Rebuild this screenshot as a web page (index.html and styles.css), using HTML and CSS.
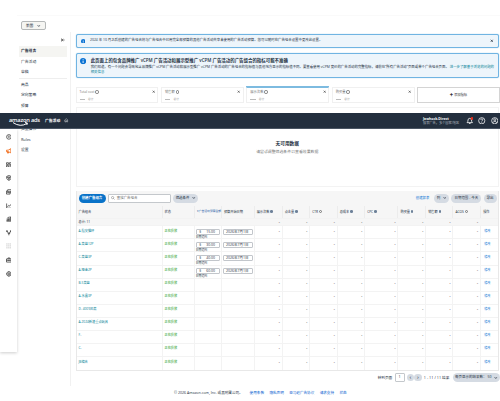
FILE: index.html
```html
<!DOCTYPE html>
<html lang="zh-CN">
<head>
    <meta charset="UTF-8">
    <meta name="viewport" content="width=device-width, initial-scale=1.0">
    <title>广告组合</title>
    <link rel="stylesheet" href="styles.css">
</head>
<body>

    <!-- Shared symbols -->
    <svg class="symbols" width="0" height="0">
        <symbol id="i-info" viewBox="0 0 10 10"><circle cx="5" cy="5" r="5"/><path d="M5 2v1.4M5 4.3v3.8" stroke="#fff" stroke-width="1.4"/></symbol>
        <symbol id="i-close" viewBox="0 0 10 10"><path d="M2 2l6 6M8 2l-6 6" stroke="currentColor" stroke-width="2"/></symbol>
        <symbol id="i-down" viewBox="0 0 10 10"><path d="M1.5 3l3.5 4 3.5-4" fill="none" stroke="currentColor" stroke-width="1.8"/></symbol>
    </svg>

    <header class="topbar">
        <div class="logo">amazon ads
            <svg viewBox="0 0 30 5"><path d="M4 0.6q7.500 5 14 0.800M16 0.500l2.400 0.500-0.600 2" fill="none" stroke="#fff" stroke-width="1"/></svg>
        </div>
        <span class="topbar-title">广告活动</span>
        <svg class="home" viewBox="0 0 10 10"><path d="M1 5l4-3.500 4 3.500M2 4.500v4.300h2.200V6h1.600v2.800H8V4.500" fill="none" stroke="#fff" stroke-width="0.9"/></svg>
        <div class="account">
            <b>Jawhock-Direct</b>
            <span>搜索广告，多个国家/地区</span>
        </div>
        <svg class="top-icon" viewBox="0 0 14 14"><path d="M2 10.500q1.800-1.500 1.800-5Q4 2.500 7 2.500t3.200 3q0 3.500 1.800 5zM5.500 12.200h3" fill="none" stroke="#fff" stroke-width="1.500"/><circle cx="11.300" cy="2.700" r="2.700" fill="#e0301e"/></svg>
        <svg class="top-icon" viewBox="0 0 14 14"><circle cx="7" cy="7" r="5.800" fill="none" stroke="#fff" stroke-width="1.400"/><path d="M5 5.500q0-1.800 2-1.800t2 1.700q0 1-2 1.900v1M7 9.500v1.300" fill="none" stroke="#fff" stroke-width="1.300"/></svg>
        <svg class="top-icon" viewBox="0 0 14 14"><circle cx="7" cy="7" r="5.800" fill="none" stroke="#fff" stroke-width="1.400"/><circle cx="7" cy="5.300" r="1.900" fill="none" stroke="#fff" stroke-width="1.300"/><path d="M3.300 10.800q0.700-2.500 3.700-2.500t3.700 2.500" fill="none" stroke="#fff" stroke-width="1.300"/></svg>
    </header>

    <nav class="rail">
        <svg viewBox="0 0 12 12"><circle cx="6" cy="6" r="4.800"/><path d="M6 3v4M4.500 5.500L6 7.200l1.500-1.700"/></svg>
        <svg class="on" viewBox="0 0 12 12"><path d="M1 4.500h3.500L10 1.500v8.500L4.500 7.500H1zM3 7.500v3h2.200V8"/></svg>
        <svg viewBox="0 0 12 12"><path d="M1 1.500h4v3.500H1zM7 1.500h4v3.500H7zM1 7h4v3.500H1zM7 7.500h4M7 10h4"/></svg>
        <svg viewBox="0 0 12 12"><path d="M6 1l4.700 2v3.500Q10 9.700 6 11.200 2 9.700 1.300 6.500V3z"/><circle cx="6" cy="5.500" r="1.800"/><path d="M2 4l3 1.500M10 4L7 5.500M6 7.500v3"/></svg>
        <svg viewBox="0 0 12 12"><path d="M3.500 1.500h7.500v6H3.500zM3.500 4H1v6.500h7.500v-3"/><path d="M4 7l2.500-3 2 2L10.500 4"/></svg>
        <svg viewBox="0 0 12 12"><path d="M1.300 1v9.800H11M3 8l2.500-3 2 1.500L10.500 2.500"/></svg>
        <svg viewBox="0 0 12 12"><path d="M1 10.800h10M2 10V7.500h1.500V10M5 10V5.500h1.500V10M8.300 10V2h1.500v8M1.500 5.500L7 1.500"/></svg>
        <svg viewBox="0 0 12 12"><path d="M6 11V7L2 2.500M6 7l4-4.500M3 6l3 2 3-2"/><circle cx="2" cy="2.300" r="1.200"/><circle cx="10" cy="2.300" r="1.200"/></svg>
        <svg class="dim" viewBox="0 0 12 12"><path d="M1 2h2M5 2h2M9 2h2M1 6h2M5 6h2M9 6h2M1 10h2M5 10h2M9 10h2"/></svg>
        <svg viewBox="0 0 12 12"><path d="M1 4h10v6.500H1zM4 4V2h4v2M1 7h10M6 6v2"/></svg>
        <svg viewBox="0 0 12 12"><circle cx="6" cy="6" r="4.500"/><circle cx="6" cy="6" r="1.800"/><path d="M6 0.500v2M6 9.500v2M0.500 6h2M9.500 6h2"/></svg>
    </nav>

    <div class="page">
        <div class="country-bar"><button class="country">美国 <svg><use href="#i-down"/></svg></button></div>

        <div class="columns">
            <aside class="sidebar">
                <div class="collapse"><svg viewBox="0 0 10 10"><path d="M1 1v8M9 5H3M5.500 2L2.500 5l3 3" fill="none" stroke="#333" stroke-width="1.500"/></svg></div>
                <a class="side-item selected">广告组合</a>
                <a class="side-item">广告活动</a>
                <a class="side-item">草稿</a>
                <hr>
                <a class="side-item">商品</a>
                <a class="side-item">定向策略</a>
                <a class="side-item">预算</a>
                <a class="side-item bulk">批量操作</a>
                <a class="side-item">Rules</a>
                <a class="side-item">设置</a>
            </aside>

            <main class="content">
                <div class="alert alert-small">
                    <svg class="info"><use href="#i-info"/></svg>
                    <span>2024 年 10 月之后创建的广告组合将与广告组合中已用完全部预算的其他广告活动共享未使用的广告活动预算。您可以随时在广告组合设置中更改此设置。</span>
                    <svg class="close"><use href="#i-close"/></svg>
                </div>

                <div class="alert alert-large">
                    <svg class="info"><use href="#i-info"/></svg>
                    <div>
                        <h4>此页面上的包含品牌推广 vCPM 广告活动和展示型推广 vCPM 广告活动的广告组合的指标可能不准确</h4>
                        <p>我们知道，有一个问题会导致包含品牌推广 vCPM 广告活动和展示型推广 vCPM 广告活动的广告组合的指标值与其他地方显示的指标值不同。要查看使用 vCPM 竞价的广告活动的完整指标，请前往“所有广告活动”页面或单个广告组合页面。 <a>进一步了解基于浏览的问题的<br>相关信息</a></p>
                    </div>
                </div>

                <div class="metrics">
                    <div class="metric"><div>Total cost <i class="tip"></i></div><div class="sum"><b></b>总计</div><svg class="close"><use href="#i-close"/></svg></div>
                    <div class="metric"><div>销售额 <i class="tip"></i></div><div class="sum"><b></b>总计</div><svg class="close"><use href="#i-close"/></svg></div>
                    <div class="metric active"><div>展示次数 <i class="tip"></i></div><div class="sum"><b></b>总计</div><svg class="close"><use href="#i-close"/></svg></div>
                    <div class="metric"><div>购买量 <i class="tip"></i></div><div class="sum"><b></b>总计</div><svg class="close"><use href="#i-close"/></svg></div>
                    <div class="metric add">✚ 添加指标</div>
                </div>

                <section class="chart">
                    <h3>无可用数据</h3>
                    <p>请尝试调整筛选条件以查看效果数据</p>
                </section>

                <section class="panel">
                    <div class="toolbar">
                        <button class="primary">创建广告组合</button>
                        <div class="search"><svg viewBox="0 0 10 10"><circle cx="4" cy="4" r="2.800" fill="none" stroke="#555"/><path d="M6 6l3 3" stroke="#555"/></svg>查找广告组合</div>
                        <button class="pill filter">筛选条件 <svg><use href="#i-down"/></svg></button>
                        <a class="create-report">创建报表</a>
                        <button class="pill cols">列 <svg><use href="#i-down"/></svg></button>
                        <button class="pill range">日期范围 - 今天</button>
                        <button class="pill export">导出</button>
                    </div>
                    <div class="grid" id="grid">
                        <div class="row head">
                            <span>广告组合</span><span>状态</span><span class="sorted">▾广告活动预算金额</span><span>预算开始日期</span>
                            <span>展示次数 <i class="tip blue"></i></span><span>点击量 <i class="tip blue"></i></span><span>CTR <i class="tip"></i></span><span>总成本 <i class="tip blue"></i></span><span>CPC <i class="tip blue"></i></span><span>购买量 <i class="tip blue"></i></span><span>销售额 <i class="tip blue"></i></span><span>ACOS <i class="tip"></i></span><span>操作</span>
                        </div>
                        <div class="row total">
                            <span>总计: 11</span><span></span><span></span><span></span>
                            <span class="num">-</span><span class="num">-</span><span class="num">-</span><span class="num">-</span><span class="num">-</span><span class="num">-</span><span class="num">-</span><span class="num">-</span><span></span>
                        </div>
                    </div>
                </section>

                <div class="pager">
                    <span>转到页面</span>
                    <span class="page-input">1</span>
                    <span class="step">‹</span>
                    <span class="step next">›</span>
                    <span class="count">1 - 11 / 11 结果</span>
                    <button class="pill per-page">每页显示的结果数： 50 <svg><use href="#i-down"/></svg></button>
                </div>
            </main>
        </div>

        <footer class="footer">
            <span>© 2026 Amazon.com, Inc. 或其附属公司。</span>
            <a>使用条款</a><a>隐私声明</a><a>亚马逊广告协议</a><a>请求支持</a><a>状态</a>
        </footer>
    </div>

    <script>
        // name, budget
        const portfolios = [
            ['A-指尖猫环', '15.00'],
            ['A-菜篮12P', '30.00'],
            ['C-菜篮3P', '40.00'],
            ['A-哑金2P', '60.00'],
            ['B-5菜篮'],
            ['A-水晶3P'],
            ['D- 4009风扇'],
            ['A-2024新速重点玩具'],
            ['F-'],
            ['C-'],
            ['JB编合']
        ];

        const grid = document.getElementById('grid');
        portfolios.forEach(function (p) {
            const row = document.createElement('div');
            row.className = 'row';
            let html = '<span class="name">' + p[0] + '</span><span class="status">正在投放</span>';
            if (p[1]) {
                html += '<span class="budget"><u class="field"><em>$</em>' + p[1] + '</u><small>日期范围</small></span>';
                html += '<span class="budget"><u class="field date">2026年7月1日</u></span>';
            } else {
                html += '<span></span><span></span>';
            }
            for (let i = 0; i < 8; i++) {
                html += '<span class="num">-</span>';
            }
            html += '<span class="edit">修改</span>';
            row.innerHTML = html;
            grid.appendChild(row);
        });
    </script>

</body>
</html>
```
FILE: styles.css
```css
* {
    box-sizing: border-box;
}
body {
    margin: 0;
    width: 500px;
    height: 401px;
    overflow: hidden;
    position: relative;
    background: #fff;
    color: #232f3e;
    font-family: "Open Sans", "Noto Sans CJK SC", sans-serif;
    font-size: 3.3px;
    line-height: 1.4;
}
h3, h4, p {
    margin: 0;
}
button {
    font: inherit;
    color: inherit;
    padding: 0;
    border: 0;
    white-space: nowrap;
}
svg {
    display: block;
    flex: none;
}
.symbols {
    position: absolute;
}

/* Fixed header */
.topbar {
    position: absolute;
    top: 113px;
    left: 0;
    width: 500px;
    height: 16px;
    z-index: 3;
    display: flex;
    align-items: center;
    background: #232f3e;
    color: #fff;
    border-bottom: 1px solid #4a5563;
    padding: 0 2px 0 9px;
}
.logo {
    width: 36px;
    height: 10px;
    font-size: 5.7px;
    font-weight: 600;
    line-height: 8px;
    white-space: nowrap;
    letter-spacing: -0.2px;
}
.logo svg {
    width: 30px;
    height: 5px;
    margin-top: -1.5px;
}
.topbar-title {
    width: 19px;
    font-size: 3.8px;
    font-weight: 700;
    white-space: nowrap;
}
.home {
    width: 4.5px;
    height: 4.5px;
}
.account {
    margin-left: auto;
    width: 42.5px;
    font-size: 3.2px;
    line-height: 4px;
    white-space: nowrap;
}
.account b {
    display: block;
    font-size: 3.4px;
    line-height: 4px;
}
.account span {
    color: #aab2bc;
}
.top-icon {
    width: 7.5px;
    height: 7.5px;
    margin-right: 5px;
}
.top-icon:last-child {
    margin-right: 0;
}

/* Icon rail */
.rail {
    position: absolute;
    top: 129px;
    left: 0;
    width: 17px;
    height: 223px;
    z-index: 2;
    padding: 5.3px 0 0 5.5px;
    background: #fff;
    box-shadow: 0 1px 3px rgba(0, 0, 0, 0.2);
}
.rail svg {
    width: 5.8px;
    height: 5.8px;
    margin-bottom: 7.85px;
    fill: none;
    stroke: #333;
    stroke-width: 1.5;
}
.rail .on {
    stroke: #f0640f;
    stroke-width: 1.7;
}
.rail .dim {
    stroke: #999;
}

.page {
    padding: 15px 0 0 17px;
}
.country-bar {
    height: 16.5px;
    padding: 5px 0 0 4px;
    border-top: 1px solid #fafafa;
}
.country {
    display: flex;
    align-items: center;
    justify-content: center;
    gap: 4px;
    width: 24.5px;
    height: 9px;
    border: 1px solid #b5b8b8;
    border-radius: 2px;
    background: #f5f5f2;
    font-size: 3.7px;
}
.country svg, .pill svg {
    width: 3.6px;
    height: 3.6px;
}
.columns {
    display: flex;
    height: 354px;
}

/* Side menu */
.sidebar {
    width: 54px;
    padding: 6px 3px 0 2px;
    border-right: 1px solid #f1f1f1;
}
.collapse {
    display: flex;
    justify-content: flex-end;
    height: 8.8px;
    padding-right: 2.5px;
}
.collapse svg {
    width: 4px;
    height: 4px;
    margin-top: 0.5px;
}
.side-item {
    display: block;
    height: 10.5px;
    padding-left: 2px;
    font-size: 3.8px;
    line-height: 10.8px;
}
.side-item.selected {
    background: #f5f5f2;
    font-weight: 700;
}
.sidebar hr {
    height: 1px;
    margin: 0.6px 0 0.6px;
    border: 0;
    background: #eee;
}
.side-item.bulk {
    margin-top: 12.6px;
}

/* Content */
.content {
    flex: 1;
    padding: 2.5px 1px 0 4.5px;
}
.alert {
    display: flex;
    border: 1px solid #70b4e2;
    border-radius: 2px;
    background: #edf5fb;
    box-shadow: 0 0 1px #70b4e2;
}
.info {
    fill: #0972d3;
}
.alert-small {
    align-items: center;
    height: 13.5px;
    padding: 0 4px;
    font-size: 3.41px;
    white-space: nowrap;
}
.alert-small .info {
    width: 4.5px;
    height: 4.5px;
    margin-right: 5px;
}
.alert-small .close {
    margin-left: auto;
}
.close {
    width: 3.6px;
    height: 3.6px;
}
.alert-large {
    height: 25px;
    margin-top: 5.5px;
    padding: 3.2px 3px 0;
}
.alert-large .info {
    width: 6.2px;
    height: 6.2px;
    margin: 1.2px 4.3px 0 0.7px;
}
.alert h4 {
    font-size: 4.45px;
    line-height: 6.5px;
    font-weight: 600;
    white-space: nowrap;
}
.alert p {
    font-size: 3.42px;
    line-height: 5px;
    margin-top: 0.6px;
    white-space: nowrap;
}
.alert a {
    color: #007e94;
}
.metrics {
    display: grid;
    grid-template-columns: repeat(5, 1fr);
    gap: 2.4px;
    height: 16px;
    margin: 9px -1px 0 0;
}
.metric {
    position: relative;
    padding: 1.8px 3px 0;
    border: 1px solid #f0f0f0;
    color: #777;
    white-space: nowrap;
}
.metric .close {
    position: absolute;
    top: 2px;
    right: 2px;
    width: 3.4px;
    height: 3.4px;
    color: #444;
}
.metric.active {
    border-top-color: #7dbbe0;
    box-shadow: 0 -1px #7dbbe0;
}
.metric .sum {
    display: flex;
    align-items: center;
    gap: 3px;
    margin-top: 3.2px;
    font-size: 2.8px;
    color: #999;
}
.sum b {
    width: 5.5px;
    height: 1px;
    background: #bbb;
}
.metric.add {
    display: flex;
    align-items: center;
    justify-content: center;
    padding: 0;
    border: 1px solid #d4d4d4;
    color: #333;
}
.tip {
    display: inline-block;
    width: 3.4px;
    height: 3.4px;
    border: 1px solid #777;
    border-radius: 50%;
    vertical-align: -0.9px;
}
.tip.blue {
    width: 2.6px;
    height: 2.6px;
    border: 0;
    background: #6d8199;
    vertical-align: -0.3px;
}
.chart {
    height: 79.5px;
    margin-top: 4px;
    padding-top: 31.5px;
    border: 1px solid #f3f3f3;
    text-align: center;
}
.chart h3 {
    font-size: 4.7px;
    line-height: 7px;
}
.chart p {
    margin-top: 1.5px;
    font-size: 3.9px;
    line-height: 7px;
    color: #777;
}

/* Table panel */
.panel {
    margin-top: 4.5px;
    border: solid #e8e8e8;
    border-width: 0 1px 1px;
}
.toolbar {
    display: flex;
    align-items: center;
    height: 14.5px;
    padding: 0 1.5px 0 2px;
    background: #f6f6f6;
}
.primary {
    width: 27px;
    height: 8.5px;
    border-radius: 5px;
    background: #0972c8;
    color: #fff;
    font-weight: 700;
    font-size: 3.45px;
}
.search {
    display: flex;
    align-items: center;
    gap: 2px;
    width: 63px;
    height: 9px;
    margin-left: 2.3px;
    padding-left: 2px;
    border: 1px solid #c4c8cc;
    border-radius: 1px;
    background: #fff;
    font-size: 3.45px;
    color: #666;
}
.search svg {
    width: 4px;
    height: 4px;
}
.pill {
    display: flex;
    align-items: center;
    justify-content: center;
    gap: 2.5px;
    height: 8.5px;
    border-radius: 5px;
    background: #d5dbe3;
    font-size: 3.45px;
}
.filter {
    width: 25px;
    margin-left: 2.3px;
}
.create-report {
    margin-left: auto;
    color: #0972d3;
    font-size: 3.4px;
}
.cols {
    width: 14.5px;
    margin-left: 5px;
}
.range {
    width: 30px;
    margin-left: 2.5px;
}
.export {
    width: 13px;
    margin-left: 2.2px;
}
.row {
    display: grid;
    grid-template-columns: 86px 32.2px 27.2px 32.8px 28px 27.5px 27.5px 27.5px 33.3px 27.7px 27.3px 27.7px 1fr;
    height: 13.1px;
    border-bottom: 1px solid #f3f3f3;
    white-space: nowrap;
}
.row:last-child {
    border-bottom: 0;
}
.row > span {
    padding: 2.3px 2px 0;
    border-right: 1px solid #f3f3f3;
    font-size: 3.2px;
}
.row > span:last-child {
    border-right: 0;
}
.head {
    height: 13px;
    background: #f6f6f6;
}
.head > span {
    padding-top: 4px;
    border-color: #ececec;
}
.row > .sorted {
    padding-right: 0;
    color: #2a63a8;
    font-size: 2.8px;
}
.total {
    height: 7.8px;
    background: #f6f6f6;
}
.total > span {
    padding-top: 1.5px;
    border-color: #f6f6f6;
}
.row > .num {
    text-align: right;
    font-weight: 700;
    color: #333;
}
.row .name {
    color: #007e94;
}
.row .status {
    color: #1d9b1d;
}
.row .edit {
    color: #0972d3;
    padding-left: 3px;
}
.row > .budget {
    padding: 2.6px 0.5px 0 1px;
}
.field {
    display: block;
    position: relative;
    height: 6px;
    padding-left: 9.5px;
    border: 1px solid #c2c6cb;
    border-radius: 1px;
    text-decoration: none;
    line-height: 4px;
    font-size: 3.5px;
}
.field em {
    position: absolute;
    left: 2.5px;
    font-style: normal;
}
.field.date {
    padding-left: 2px;
}
.budget small {
    display: block;
    font-size: 2.9px;
    line-height: 4px;
}

/* Pagination */
.pager {
    display: flex;
    align-items: center;
    justify-content: flex-end;
    height: 12px;
    margin-right: -0.5px;
    font-size: 3.65px;
    white-space: nowrap;
}
.page-input {
    width: 10px;
    height: 8.5px;
    margin: 0 2px 0 2.3px;
    border: 1px solid #c4c8cc;
    border-radius: 1px;
    line-height: 6px;
    text-align: center;
}
.step {
    width: 7.5px;
    height: 7.5px;
    border-radius: 50%;
    background: #d5dbe3;
    font-size: 6px;
    line-height: 6px;
    text-align: center;
}
.count {
    margin: 0 3.5px 0 2.2px;
    letter-spacing: 0.06px;
}
.per-page {
    width: 46.5px;
    font-size: 3.5px;
}
.footer {
    display: flex;
    gap: 5.4px;
    padding: 4.8px 0 0 157px;
    font-size: 3.6px;
    white-space: nowrap;
}
.footer span {
    margin-right: 1.5px;
}
.footer a {
    color: #0b5fd0;
}
```
